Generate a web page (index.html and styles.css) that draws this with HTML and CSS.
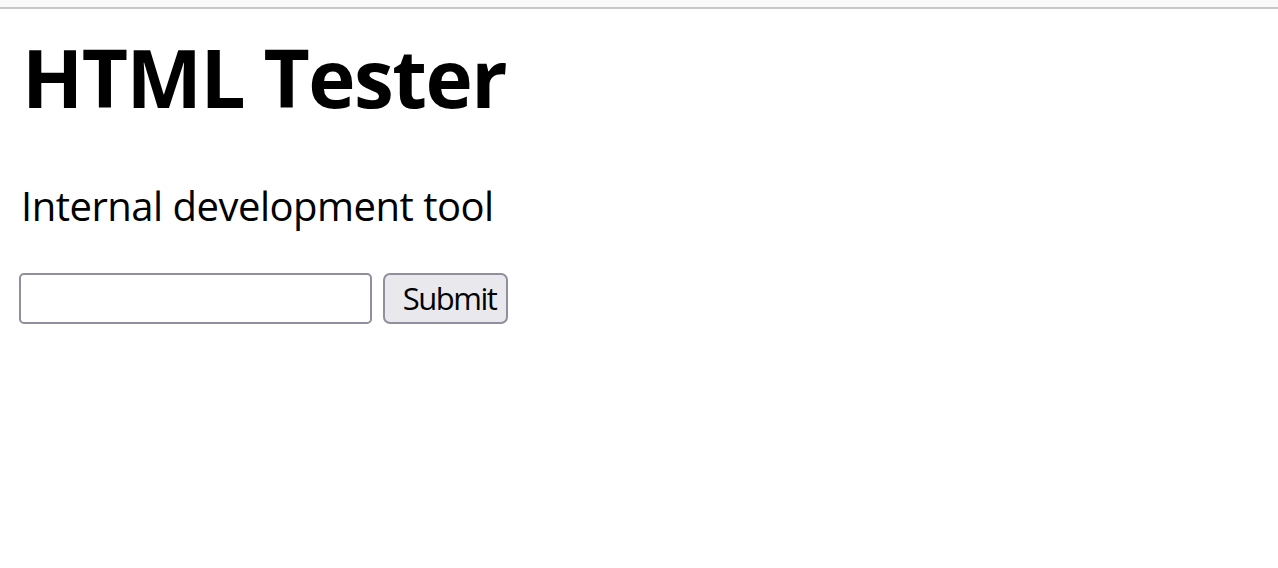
FILE: index.html
```html
<!DOCTYPE html>
<html lang="en">
<head>
<meta charset="utf-8">
<title>HTML Tester</title>
<link rel="stylesheet" href="styles.css">
</head>
<body>
<div class="topbar"></div>
<main class="page">
  <h1 class="title">HTML Tester</h1>
  <p class="subtitle">Internal development tool</p>
  <form class="form">
    <input class="field" type="text">
    <button class="btn" type="button">Submit</button>
  </form>
</main>
</body>
</html>
```

FILE: styles.css
```css
html, body {
  margin: 0;
  padding: 0;
  background: #ffffff;
}
body {
  font-family: "Open Sans", "Noto Sans", sans-serif;
  color: #000000;
}
.topbar {
  height: 7px;
  background: #f9f9fa;
  border-bottom: 2px solid #c8c8c8;
}
.page {
  padding: 0 19px;
}
.title {
  margin: 28px 0 0;
  padding-left: 3px;
  font-size: 80px;
  line-height: 80px;
  font-weight: 700;
  letter-spacing: -1.5px;
}
.subtitle {
  margin: 69px 0 0;
  padding-left: 2px;
  font-size: 40px;
  line-height: 40px;
  font-weight: 400;
  letter-spacing: -0.5px;
}
.form {
  margin: 47px 0 0;
  display: flex;
  align-items: flex-start;
  gap: 11px;
}
.field {
  box-sizing: border-box;
  width: 353px;
  height: 51px;
  margin: 0;
  border: 2px solid #8f8f9d;
  border-radius: 5px;
  background: #ffffff;
  font-family: inherit;
  font-size: 33px;
  padding: 0 6px;
}
.btn {
  box-sizing: border-box;
  width: 125px;
  height: 51px;
  margin: 0;
  padding: 0 0 0 8px;
  border: 2px solid #8f8f9d;
  border-radius: 7px;
  background: #e9e9ed;
  color: #000000;
  font-family: inherit;
  font-size: 31px;
  line-height: 1;
  letter-spacing: -1.5px;
}
```
